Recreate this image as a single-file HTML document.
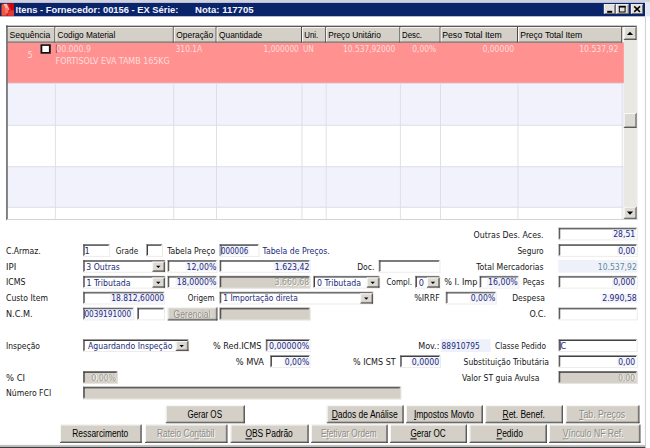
<!DOCTYPE html>
<html lang="pt-BR">
<head>
<meta charset="utf-8">
<title>Itens - Fornecedor: 00156 - EX Série: Nota: 117705</title>
<style>
html,body{margin:0;padding:0;background:#fff;width:650px;height:448px;overflow:hidden}
svg{display:block;font-family:"DejaVu Sans Condensed","DejaVu Sans","Liberation Sans",sans-serif}
.h{font-family:"Liberation Sans",sans-serif}
text{white-space:pre}
</style>
</head>
<body>
<svg width="650" height="448" viewBox="0 0 650 448">
<rect x="0.00" y="0.00" width="650.00" height="448.00" fill="#ffffff" />
<rect x="0.00" y="0.00" width="650.00" height="2.50" fill="#cfd2de" />
<rect x="0.00" y="2.80" width="645.00" height="13.50" fill="#0a246a" />
<rect x="645.20" y="2.40" width="4.80" height="14.10" fill="#e4e8f0" />
<rect x="644.90" y="16.60" width="1.00" height="429.40" fill="#cfcfd2" />
<rect x="0.00" y="444.90" width="646.00" height="1.40" fill="#c0c0c0" />
<rect x="0.00" y="446.70" width="645.40" height="1.30" fill="#404040" />
<g>
<rect x="1.60" y="3.60" width="12.40" height="12.20" fill="#dc2020" />
<path d="M1.6 5 L4.6 3.8 L8.6 9 L6 15.6 L1.6 15.6 Z" fill="#f4583c"/>
<path d="M3.4 4 L6.8 3.8 L9.4 9.6 L7.2 11 Z" fill="#ffb4b0"/>
<path d="M4.8 8.5 L7.6 8 L8.4 13 L5.6 13.6 Z" fill="#f87878"/>
<path d="M8.8 3.6 L14 3.6 L14 10 L11 10 Z" fill="#cc0808"/>
<path d="M9 11 L14 10.4 L14 15.8 L8 15.8 Z" fill="#e43a30"/>
</g>
<text x="15.60" y="12.60" font-size="9.5" fill="#f4f4ff" textLength="162.8" lengthAdjust="spacingAndGlyphs" font-weight="bold" class="h" >Itens - Fornecedor: 00156 - EX Série:</text>
<text x="195.00" y="12.60" font-size="9.5" fill="#f4f4ff" textLength="58.6" lengthAdjust="spacingAndGlyphs" font-weight="bold" class="h" >Nota: 117705</text>
<rect x="603.90" y="4.20" width="11.30" height="9.70" fill="#e3e1dc" />
<rect x="603.90" y="4.20" width="11.30" height="0.70" fill="#ffffff" />
<rect x="603.90" y="4.20" width="0.70" height="9.70" fill="#ffffff" />
<rect x="604.60" y="13.00" width="10.60" height="0.90" fill="#6c6c6c" />
<rect x="614.30" y="4.90" width="0.90" height="9.00" fill="#6c6c6c" />
<rect x="607.20" y="10.80" width="5.00" height="2.00" fill="#000" />
<rect x="615.90" y="4.20" width="12.70" height="9.70" fill="#e3e1dc" />
<rect x="615.90" y="4.20" width="12.70" height="0.70" fill="#ffffff" />
<rect x="615.90" y="4.20" width="0.70" height="9.70" fill="#ffffff" />
<rect x="616.60" y="13.00" width="12.00" height="0.90" fill="#6c6c6c" />
<rect x="627.70" y="4.90" width="0.90" height="9.00" fill="#6c6c6c" />
<rect x="619.3" y="6.6" width="5.8" height="5.4" fill="none" stroke="#000" stroke-width="1"/>
<rect x="618.80" y="5.80" width="6.80" height="1.70" fill="#000" />
<rect x="630.90" y="4.20" width="12.00" height="9.70" fill="#e3e1dc" />
<rect x="630.90" y="4.20" width="12.00" height="0.70" fill="#ffffff" />
<rect x="630.90" y="4.20" width="0.70" height="9.70" fill="#ffffff" />
<rect x="631.60" y="13.00" width="11.30" height="0.90" fill="#6c6c6c" />
<rect x="642.00" y="4.90" width="0.90" height="9.00" fill="#6c6c6c" />
<path d="M634.2 6.4 L640.0 11.9 M640.0 6.4 L634.2 11.9" stroke="#000" stroke-width="1.5" fill="none"/>
<rect x="6.00" y="25.00" width="631.40" height="195.20" fill="#ffffff" />
<rect x="7.60" y="42.50" width="616.40" height="40.80" fill="#ff9290" />
<rect x="7.60" y="83.30" width="616.40" height="42.00" fill="#f1f2fc" />
<rect x="7.60" y="125.30" width="616.40" height="41.50" fill="#ffffff" />
<rect x="7.60" y="166.80" width="616.40" height="40.50" fill="#f1f2fc" />
<rect x="7.60" y="207.30" width="616.40" height="11.70" fill="#ffffff" />
<rect x="7.60" y="82.80" width="616.00" height="0.90" fill="#d9d9e4" />
<rect x="7.60" y="124.80" width="616.00" height="0.90" fill="#d9d9e4" />
<rect x="7.60" y="166.30" width="616.00" height="0.90" fill="#d9d9e4" />
<rect x="7.60" y="206.80" width="616.00" height="0.90" fill="#d9d9e4" />
<rect x="54.90" y="83.30" width="0.90" height="135.70" fill="#dcdce6" />
<rect x="173.30" y="83.30" width="0.90" height="135.70" fill="#dcdce6" />
<rect x="216.10" y="83.30" width="0.90" height="135.70" fill="#dcdce6" />
<rect x="301.50" y="83.30" width="0.90" height="135.70" fill="#dcdce6" />
<rect x="325.70" y="83.30" width="0.90" height="135.70" fill="#dcdce6" />
<rect x="399.90" y="83.30" width="0.90" height="135.70" fill="#dcdce6" />
<rect x="440.10" y="83.30" width="0.90" height="135.70" fill="#dcdce6" />
<rect x="517.50" y="83.30" width="0.90" height="135.70" fill="#dcdce6" />
<rect x="621.70" y="83.30" width="0.90" height="135.70" fill="#dcdce6" />
<rect x="7.60" y="26.80" width="614.60" height="15.60" fill="#d4d0c8" />
<rect x="7.60" y="27.00" width="614.60" height="0.80" fill="#ffffff" />
<rect x="7.60" y="41.60" width="614.60" height="1.00" fill="#555555" />
<rect x="54.40" y="26.80" width="1.00" height="15.70" fill="#4a4a4a" />
<rect x="55.40" y="27.60" width="0.90" height="14.00" fill="#ffffff" />
<rect x="172.80" y="26.80" width="1.00" height="15.70" fill="#4a4a4a" />
<rect x="173.80" y="27.60" width="0.90" height="14.00" fill="#ffffff" />
<rect x="215.60" y="26.80" width="1.00" height="15.70" fill="#4a4a4a" />
<rect x="216.60" y="27.60" width="0.90" height="14.00" fill="#ffffff" />
<rect x="301.00" y="26.80" width="1.00" height="15.70" fill="#4a4a4a" />
<rect x="302.00" y="27.60" width="0.90" height="14.00" fill="#ffffff" />
<rect x="325.20" y="26.80" width="1.00" height="15.70" fill="#4a4a4a" />
<rect x="326.20" y="27.60" width="0.90" height="14.00" fill="#ffffff" />
<rect x="399.40" y="26.80" width="1.00" height="15.70" fill="#4a4a4a" />
<rect x="400.40" y="27.60" width="0.90" height="14.00" fill="#ffffff" />
<rect x="439.60" y="26.80" width="1.00" height="15.70" fill="#4a4a4a" />
<rect x="440.60" y="27.60" width="0.90" height="14.00" fill="#ffffff" />
<rect x="517.00" y="26.80" width="1.00" height="15.70" fill="#4a4a4a" />
<rect x="518.00" y="27.60" width="0.90" height="14.00" fill="#ffffff" />
<rect x="621.20" y="26.80" width="1.00" height="15.70" fill="#4a4a4a" />
<text x="9.60" y="37.80" font-size="9.6" fill="#000" textLength="40.6" lengthAdjust="spacingAndGlyphs" class="h" >Sequência</text>
<text x="57.60" y="37.80" font-size="9.6" fill="#000" textLength="57.7" lengthAdjust="spacingAndGlyphs" class="h" >Codigo Material</text>
<text x="176.30" y="37.80" font-size="9.6" fill="#000" textLength="36.9" lengthAdjust="spacingAndGlyphs" class="h" >Operação</text>
<text x="219.00" y="37.80" font-size="9.6" fill="#000" textLength="43.2" lengthAdjust="spacingAndGlyphs" class="h" >Quantidade</text>
<text x="304.30" y="37.80" font-size="9.6" fill="#000" textLength="14.0" lengthAdjust="spacingAndGlyphs" class="h" >Uni.</text>
<text x="328.20" y="37.80" font-size="9.6" fill="#000" textLength="52.6" lengthAdjust="spacingAndGlyphs" class="h" >Preço Unitário</text>
<text x="402.00" y="37.80" font-size="9.6" fill="#000" textLength="20.0" lengthAdjust="spacingAndGlyphs" class="h" >Desc.</text>
<text x="442.20" y="37.80" font-size="9.6" fill="#000" textLength="59.6" lengthAdjust="spacingAndGlyphs" class="h" >Peso Total Item</text>
<text x="520.20" y="37.80" font-size="9.6" fill="#000" textLength="62.0" lengthAdjust="spacingAndGlyphs" class="h" >Preço Total Item</text>
<rect x="623.80" y="26.60" width="12.80" height="192.60" fill="#eae8e3" />
<rect x="623.80" y="26.80" width="13.00" height="13.20" fill="#dedbd4" />
<rect x="623.80" y="26.80" width="13.00" height="0.80" fill="#ffffff" />
<rect x="623.80" y="26.80" width="0.80" height="13.20" fill="#ffffff" />
<rect x="624.60" y="38.40" width="12.20" height="0.80" fill="#808080" />
<rect x="635.20" y="27.60" width="0.80" height="12.40" fill="#808080" />
<rect x="623.80" y="39.20" width="13.00" height="0.80" fill="#404040" />
<rect x="636.00" y="26.80" width="0.80" height="13.20" fill="#404040" />
<path d="M626.90 34.95 L633.10 34.95 L630.00 31.65 Z" fill="#000"/>
<rect x="623.80" y="113.00" width="13.00" height="15.00" fill="#dcdad4" />
<rect x="623.80" y="113.00" width="13.00" height="0.80" fill="#ffffff" />
<rect x="623.80" y="113.00" width="0.80" height="15.00" fill="#ffffff" />
<rect x="624.60" y="126.40" width="12.20" height="0.80" fill="#808080" />
<rect x="635.20" y="113.80" width="0.80" height="14.20" fill="#808080" />
<rect x="623.80" y="127.20" width="13.00" height="0.80" fill="#404040" />
<rect x="636.00" y="113.00" width="0.80" height="15.00" fill="#404040" />
<rect x="623.80" y="206.80" width="13.00" height="12.40" fill="#dedbd4" />
<rect x="623.80" y="206.80" width="13.00" height="0.80" fill="#ffffff" />
<rect x="623.80" y="206.80" width="0.80" height="12.40" fill="#ffffff" />
<rect x="624.60" y="217.60" width="12.20" height="0.80" fill="#808080" />
<rect x="635.20" y="207.60" width="0.80" height="11.60" fill="#808080" />
<rect x="623.80" y="218.40" width="13.00" height="0.80" fill="#404040" />
<rect x="636.00" y="206.80" width="0.80" height="12.40" fill="#404040" />
<path d="M626.90 211.55 L633.10 211.55 L630.00 214.85 Z" fill="#000"/>
<rect x="6.00" y="25.70" width="630.80" height="1.20" fill="#454545" />
<rect x="6.00" y="25.00" width="0.80" height="195.20" fill="#6e6e6e" />
<rect x="6.80" y="25.80" width="0.80" height="193.60" fill="#404040" />
<rect x="7.60" y="219.00" width="629.80" height="0.90" fill="#d0cec8" />
<rect x="636.60" y="26.60" width="0.80" height="193.60" fill="#e4e2dc" />
<text x="27.60" y="58.40" font-size="9.1" fill="#ffdcdc" >5</text>
<rect x="40.50" y="44.30" width="10.30" height="9.40" fill="#111" />
<rect x="42.30" y="45.90" width="6.60" height="6.10" fill="#ffffff" />
<rect x="55.90" y="44.60" width="0.70" height="8.40" fill="#803030" />
<text x="56.20" y="52.20" font-size="9.1" fill="#ffdcdc" textLength="34.8" lengthAdjust="spacingAndGlyphs" >00.000.9</text>
<text x="55.60" y="64.20" font-size="9.1" fill="#ffdcdc" textLength="114.0" lengthAdjust="spacingAndGlyphs" >FORTISOLV EVA TAMB 165KG</text>
<text x="175.60" y="52.20" font-size="9.1" fill="#ffdcdc" textLength="26.6" lengthAdjust="spacingAndGlyphs" >310.1A</text>
<text x="298.80" y="52.20" font-size="9.1" fill="#ffdcdc" text-anchor="end" textLength="35.2" lengthAdjust="spacingAndGlyphs" >1,000000</text>
<text x="303.00" y="52.20" font-size="9.1" fill="#ffdcdc" textLength="10.8" lengthAdjust="spacingAndGlyphs" >UN</text>
<text x="395.40" y="52.20" font-size="9.1" fill="#ffdcdc" text-anchor="end" textLength="52.4" lengthAdjust="spacingAndGlyphs" >10.537,92000</text>
<text x="436.20" y="52.20" font-size="9.1" fill="#ffdcdc" text-anchor="end" textLength="24.0" lengthAdjust="spacingAndGlyphs" >0,00%</text>
<text x="514.20" y="52.20" font-size="9.1" fill="#ffdcdc" text-anchor="end" textLength="31.8" lengthAdjust="spacingAndGlyphs" >0,00000</text>
<text x="618.40" y="52.20" font-size="9.1" fill="#ffdcdc" text-anchor="end" textLength="39.2" lengthAdjust="spacingAndGlyphs" >10.537,92</text>
<text x="6.00" y="253.60" font-size="9.1" fill="#151515" textLength="34.8" lengthAdjust="spacingAndGlyphs" >C.Armaz.</text>
<text x="6.00" y="269.50" font-size="9.1" fill="#151515" textLength="10.2" lengthAdjust="spacingAndGlyphs" >IPI</text>
<text x="6.00" y="285.40" font-size="9.1" fill="#151515" textLength="19.6" lengthAdjust="spacingAndGlyphs" >ICMS</text>
<text x="6.00" y="301.30" font-size="9.1" fill="#151515" textLength="42.0" lengthAdjust="spacingAndGlyphs" >Custo Item</text>
<text x="6.00" y="317.20" font-size="9.1" fill="#151515" textLength="26.6" lengthAdjust="spacingAndGlyphs" >N.C.M.</text>
<rect x="83.00" y="244.10" width="27.20" height="12.60" fill="#ffffff" />
<rect x="83.00" y="255.90" width="27.20" height="0.80" fill="#e9e7e2" />
<rect x="109.40" y="244.10" width="0.80" height="12.60" fill="#e9e7e2" />
<rect x="83.00" y="244.10" width="26.40" height="0.70" fill="#707070" />
<rect x="83.00" y="244.10" width="0.70" height="11.80" fill="#707070" />
<rect x="83.70" y="244.80" width="25.00" height="0.90" fill="#2c2c30" />
<rect x="83.70" y="244.80" width="0.90" height="10.40" fill="#2c2c30" />
<text x="84.60" y="253.60" font-size="9.1" fill="#1a2a7a" >1</text>
<text x="115.80" y="253.60" font-size="9.1" fill="#151515" textLength="22.4" lengthAdjust="spacingAndGlyphs" >Grade</text>
<rect x="146.40" y="244.10" width="16.40" height="12.60" fill="#ffffff" />
<rect x="146.40" y="255.90" width="16.40" height="0.80" fill="#e9e7e2" />
<rect x="162.00" y="244.10" width="0.80" height="12.60" fill="#e9e7e2" />
<rect x="146.40" y="244.10" width="15.60" height="0.70" fill="#707070" />
<rect x="146.40" y="244.10" width="0.70" height="11.80" fill="#707070" />
<rect x="147.10" y="244.80" width="14.20" height="0.90" fill="#2c2c30" />
<rect x="147.10" y="244.80" width="0.90" height="10.40" fill="#2c2c30" />
<text x="167.20" y="253.60" font-size="9.1" fill="#151515" textLength="48.0" lengthAdjust="spacingAndGlyphs" >Tabela Preço</text>
<rect x="219.60" y="244.10" width="39.80" height="12.60" fill="#ffffff" />
<rect x="219.60" y="255.90" width="39.80" height="0.80" fill="#e9e7e2" />
<rect x="258.60" y="244.10" width="0.80" height="12.60" fill="#e9e7e2" />
<rect x="219.60" y="244.10" width="39.00" height="0.70" fill="#707070" />
<rect x="219.60" y="244.10" width="0.70" height="11.80" fill="#707070" />
<rect x="220.30" y="244.80" width="37.60" height="0.90" fill="#2c2c30" />
<rect x="220.30" y="244.80" width="0.90" height="10.40" fill="#2c2c30" />
<rect x="220.40" y="246.00" width="29.00" height="9.00" fill="#f3f3fc" />
<text x="221.00" y="253.60" font-size="9.1" fill="#1a2a7a" textLength="27.2" lengthAdjust="spacingAndGlyphs" >000006</text>
<rect x="220.90" y="246.20" width="0.70" height="8.40" fill="#202060" />
<text x="262.60" y="253.60" font-size="9.1" fill="#1a2a7a" textLength="67.2" lengthAdjust="spacingAndGlyphs" >Tabela de Preços.</text>
<rect x="83.00" y="260.00" width="82.80" height="12.60" fill="#ffffff" />
<rect x="83.00" y="271.80" width="82.80" height="0.80" fill="#e9e7e2" />
<rect x="165.00" y="260.00" width="0.80" height="12.60" fill="#e9e7e2" />
<rect x="83.00" y="260.00" width="82.00" height="0.70" fill="#707070" />
<rect x="83.00" y="260.00" width="0.70" height="11.80" fill="#707070" />
<rect x="83.70" y="260.70" width="80.60" height="0.90" fill="#2c2c30" />
<rect x="83.70" y="260.70" width="0.90" height="10.40" fill="#2c2c30" />
<rect x="152.40" y="261.70" width="12.60" height="10.00" fill="#dcd9d2" />
<rect x="152.40" y="261.70" width="12.60" height="0.80" fill="#ffffff" />
<rect x="152.40" y="261.70" width="0.80" height="10.00" fill="#ffffff" />
<rect x="153.20" y="270.10" width="11.80" height="0.80" fill="#808080" />
<rect x="163.40" y="262.50" width="0.80" height="9.20" fill="#808080" />
<rect x="152.40" y="270.90" width="12.60" height="0.80" fill="#404040" />
<rect x="164.20" y="261.70" width="0.80" height="10.00" fill="#404040" />
<path d="M156.10 265.75 L160.50 265.75 L158.30 268.05 Z" fill="#000"/>
<text x="86.30" y="269.60" font-size="9.1" fill="#1a2a7a" textLength="33.4" lengthAdjust="spacingAndGlyphs" >3 Outras</text>
<rect x="167.60" y="260.00" width="49.80" height="12.60" fill="#ffffff" />
<rect x="167.60" y="271.80" width="49.80" height="0.80" fill="#e9e7e2" />
<rect x="216.60" y="260.00" width="0.80" height="12.60" fill="#e9e7e2" />
<rect x="167.60" y="260.00" width="49.00" height="0.70" fill="#707070" />
<rect x="167.60" y="260.00" width="0.70" height="11.80" fill="#707070" />
<rect x="168.30" y="260.70" width="47.60" height="0.90" fill="#2c2c30" />
<rect x="168.30" y="260.70" width="0.90" height="10.40" fill="#2c2c30" />
<rect x="185.40" y="261.90" width="31.60" height="9.00" fill="#f3f3fc" />
<text x="216.40" y="269.50" font-size="9.1" fill="#1a2a7a" text-anchor="end" textLength="29.8" lengthAdjust="spacingAndGlyphs" >12,00%</text>
<rect x="219.60" y="260.00" width="90.80" height="12.60" fill="#ffffff" />
<rect x="219.60" y="271.80" width="90.80" height="0.80" fill="#e9e7e2" />
<rect x="309.60" y="260.00" width="0.80" height="12.60" fill="#e9e7e2" />
<rect x="219.60" y="260.00" width="90.00" height="0.70" fill="#707070" />
<rect x="219.60" y="260.00" width="0.70" height="11.80" fill="#707070" />
<rect x="220.30" y="260.70" width="88.60" height="0.90" fill="#2c2c30" />
<rect x="220.30" y="260.70" width="0.90" height="10.40" fill="#2c2c30" />
<rect x="273.60" y="261.90" width="36.40" height="9.00" fill="#f3f3fc" />
<text x="309.40" y="269.50" font-size="9.1" fill="#1a2a7a" text-anchor="end" textLength="34.6" lengthAdjust="spacingAndGlyphs" >1.623,42</text>
<text x="357.20" y="269.50" font-size="9.1" fill="#151515" textLength="17.2" lengthAdjust="spacingAndGlyphs" >Doc.</text>
<rect x="378.80" y="260.00" width="61.60" height="12.60" fill="#ffffff" />
<rect x="378.80" y="271.80" width="61.60" height="0.80" fill="#e9e7e2" />
<rect x="439.60" y="260.00" width="0.80" height="12.60" fill="#e9e7e2" />
<rect x="378.80" y="260.00" width="60.80" height="0.70" fill="#707070" />
<rect x="378.80" y="260.00" width="0.70" height="11.80" fill="#707070" />
<rect x="379.50" y="260.70" width="59.40" height="0.90" fill="#2c2c30" />
<rect x="379.50" y="260.70" width="0.90" height="10.40" fill="#2c2c30" />
<rect x="83.00" y="275.90" width="82.80" height="12.60" fill="#ffffff" />
<rect x="83.00" y="287.70" width="82.80" height="0.80" fill="#e9e7e2" />
<rect x="165.00" y="275.90" width="0.80" height="12.60" fill="#e9e7e2" />
<rect x="83.00" y="275.90" width="82.00" height="0.70" fill="#707070" />
<rect x="83.00" y="275.90" width="0.70" height="11.80" fill="#707070" />
<rect x="83.70" y="276.60" width="80.60" height="0.90" fill="#2c2c30" />
<rect x="83.70" y="276.60" width="0.90" height="10.40" fill="#2c2c30" />
<rect x="152.40" y="277.60" width="12.60" height="10.00" fill="#dcd9d2" />
<rect x="152.40" y="277.60" width="12.60" height="0.80" fill="#ffffff" />
<rect x="152.40" y="277.60" width="0.80" height="10.00" fill="#ffffff" />
<rect x="153.20" y="286.00" width="11.80" height="0.80" fill="#808080" />
<rect x="163.40" y="278.40" width="0.80" height="9.20" fill="#808080" />
<rect x="152.40" y="286.80" width="12.60" height="0.80" fill="#404040" />
<rect x="164.20" y="277.60" width="0.80" height="10.00" fill="#404040" />
<path d="M156.10 281.65 L160.50 281.65 L158.30 283.95 Z" fill="#000"/>
<text x="86.60" y="285.50" font-size="9.1" fill="#1a2a7a" textLength="44.0" lengthAdjust="spacingAndGlyphs" >1 Tributada</text>
<rect x="167.60" y="275.90" width="49.80" height="12.60" fill="#ffffff" />
<rect x="167.60" y="287.70" width="49.80" height="0.80" fill="#e9e7e2" />
<rect x="216.60" y="275.90" width="0.80" height="12.60" fill="#e9e7e2" />
<rect x="167.60" y="275.90" width="49.00" height="0.70" fill="#707070" />
<rect x="167.60" y="275.90" width="0.70" height="11.80" fill="#707070" />
<rect x="168.30" y="276.60" width="47.60" height="0.90" fill="#2c2c30" />
<rect x="168.30" y="276.60" width="0.90" height="10.40" fill="#2c2c30" />
<rect x="175.60" y="277.80" width="41.40" height="9.00" fill="#f3f3fc" />
<text x="216.40" y="285.40" font-size="9.1" fill="#1a2a7a" text-anchor="end" textLength="39.6" lengthAdjust="spacingAndGlyphs" >18,0000%</text>
<rect x="219.60" y="275.90" width="90.80" height="12.60" fill="#d4d0c8" />
<rect x="219.60" y="287.70" width="90.80" height="0.80" fill="#e9e7e2" />
<rect x="309.60" y="275.90" width="0.80" height="12.60" fill="#e9e7e2" />
<rect x="219.60" y="275.90" width="90.00" height="0.70" fill="#707070" />
<rect x="219.60" y="275.90" width="0.70" height="11.80" fill="#707070" />
<rect x="220.30" y="276.60" width="88.60" height="0.90" fill="#2c2c30" />
<rect x="220.30" y="276.60" width="0.90" height="10.40" fill="#2c2c30" />
<text x="310.00" y="286.20" font-size="9.1" fill="#ffffff" text-anchor="end" textLength="34.6" lengthAdjust="spacingAndGlyphs" >3.660,68</text>
<text x="309.20" y="285.40" font-size="9.1" fill="#9a9891" text-anchor="end" textLength="34.6" lengthAdjust="spacingAndGlyphs" >3.660,68</text>
<rect x="313.40" y="275.90" width="66.80" height="12.60" fill="#ffffff" />
<rect x="313.40" y="287.70" width="66.80" height="0.80" fill="#e9e7e2" />
<rect x="379.40" y="275.90" width="0.80" height="12.60" fill="#e9e7e2" />
<rect x="313.40" y="275.90" width="66.00" height="0.70" fill="#707070" />
<rect x="313.40" y="275.90" width="0.70" height="11.80" fill="#707070" />
<rect x="314.10" y="276.60" width="64.60" height="0.90" fill="#2c2c30" />
<rect x="314.10" y="276.60" width="0.90" height="10.40" fill="#2c2c30" />
<rect x="366.80" y="277.60" width="12.60" height="10.00" fill="#dcd9d2" />
<rect x="366.80" y="277.60" width="12.60" height="0.80" fill="#ffffff" />
<rect x="366.80" y="277.60" width="0.80" height="10.00" fill="#ffffff" />
<rect x="367.60" y="286.00" width="11.80" height="0.80" fill="#808080" />
<rect x="377.80" y="278.40" width="0.80" height="9.20" fill="#808080" />
<rect x="366.80" y="286.80" width="12.60" height="0.80" fill="#404040" />
<rect x="378.60" y="277.60" width="0.80" height="10.00" fill="#404040" />
<path d="M370.50 281.65 L374.90 281.65 L372.70 283.95 Z" fill="#000"/>
<text x="317.00" y="285.50" font-size="9.1" fill="#1a2a7a" textLength="44.0" lengthAdjust="spacingAndGlyphs" >0 Tributada</text>
<text x="386.40" y="285.40" font-size="9.1" fill="#151515" textLength="25.6" lengthAdjust="spacingAndGlyphs" >Compl.</text>
<rect x="415.20" y="275.90" width="25.20" height="12.60" fill="#ffffff" />
<rect x="415.20" y="287.70" width="25.20" height="0.80" fill="#e9e7e2" />
<rect x="439.60" y="275.90" width="0.80" height="12.60" fill="#e9e7e2" />
<rect x="415.20" y="275.90" width="24.40" height="0.70" fill="#707070" />
<rect x="415.20" y="275.90" width="0.70" height="11.80" fill="#707070" />
<rect x="415.90" y="276.60" width="23.00" height="0.90" fill="#2c2c30" />
<rect x="415.90" y="276.60" width="0.90" height="10.40" fill="#2c2c30" />
<rect x="427.00" y="277.60" width="12.60" height="10.00" fill="#dcd9d2" />
<rect x="427.00" y="277.60" width="12.60" height="0.80" fill="#ffffff" />
<rect x="427.00" y="277.60" width="0.80" height="10.00" fill="#ffffff" />
<rect x="427.80" y="286.00" width="11.80" height="0.80" fill="#808080" />
<rect x="438.00" y="278.40" width="0.80" height="9.20" fill="#808080" />
<rect x="427.00" y="286.80" width="12.60" height="0.80" fill="#404040" />
<rect x="438.80" y="277.60" width="0.80" height="10.00" fill="#404040" />
<path d="M430.70 281.65 L435.10 281.65 L432.90 283.95 Z" fill="#000"/>
<text x="418.80" y="285.50" font-size="9.1" fill="#1a2a7a" >0</text>
<text x="444.20" y="285.40" font-size="9.1" fill="#151515" textLength="33.2" lengthAdjust="spacingAndGlyphs" >% I. Imp</text>
<rect x="479.60" y="275.90" width="39.60" height="12.60" fill="#ffffff" />
<rect x="479.60" y="287.70" width="39.60" height="0.80" fill="#e9e7e2" />
<rect x="518.40" y="275.90" width="0.80" height="12.60" fill="#e9e7e2" />
<rect x="479.60" y="275.90" width="38.80" height="0.70" fill="#707070" />
<rect x="479.60" y="275.90" width="0.70" height="11.80" fill="#707070" />
<rect x="480.30" y="276.60" width="37.40" height="0.90" fill="#2c2c30" />
<rect x="480.30" y="276.60" width="0.90" height="10.40" fill="#2c2c30" />
<rect x="486.80" y="277.80" width="31.60" height="9.00" fill="#f3f3fc" />
<text x="517.80" y="285.40" font-size="9.1" fill="#1a2a7a" text-anchor="end" textLength="29.8" lengthAdjust="spacingAndGlyphs" >16,00%</text>
<rect x="83.00" y="291.80" width="81.80" height="12.60" fill="#ffffff" />
<rect x="83.00" y="303.60" width="81.80" height="0.80" fill="#e9e7e2" />
<rect x="164.00" y="291.80" width="0.80" height="12.60" fill="#e9e7e2" />
<rect x="83.00" y="291.80" width="81.00" height="0.70" fill="#707070" />
<rect x="83.00" y="291.80" width="0.70" height="11.80" fill="#707070" />
<rect x="83.70" y="292.50" width="79.60" height="0.90" fill="#2c2c30" />
<rect x="83.70" y="292.50" width="0.90" height="10.40" fill="#2c2c30" />
<rect x="110.00" y="293.70" width="54.80" height="9.00" fill="#f3f3fc" />
<text x="164.20" y="301.30" font-size="9.1" fill="#1a2a7a" text-anchor="end" textLength="53.0" lengthAdjust="spacingAndGlyphs" >18.812,60000</text>
<text x="187.80" y="301.30" font-size="9.1" fill="#151515" textLength="26.8" lengthAdjust="spacingAndGlyphs" >Origem</text>
<rect x="219.60" y="291.80" width="154.20" height="12.60" fill="#ffffff" />
<rect x="219.60" y="303.60" width="154.20" height="0.80" fill="#e9e7e2" />
<rect x="373.00" y="291.80" width="0.80" height="12.60" fill="#e9e7e2" />
<rect x="219.60" y="291.80" width="153.40" height="0.70" fill="#707070" />
<rect x="219.60" y="291.80" width="0.70" height="11.80" fill="#707070" />
<rect x="220.30" y="292.50" width="152.00" height="0.90" fill="#2c2c30" />
<rect x="220.30" y="292.50" width="0.90" height="10.40" fill="#2c2c30" />
<rect x="360.40" y="293.50" width="12.60" height="10.00" fill="#dcd9d2" />
<rect x="360.40" y="293.50" width="12.60" height="0.80" fill="#ffffff" />
<rect x="360.40" y="293.50" width="0.80" height="10.00" fill="#ffffff" />
<rect x="361.20" y="301.90" width="11.80" height="0.80" fill="#808080" />
<rect x="371.40" y="294.30" width="0.80" height="9.20" fill="#808080" />
<rect x="360.40" y="302.70" width="12.60" height="0.80" fill="#404040" />
<rect x="372.20" y="293.50" width="0.80" height="10.00" fill="#404040" />
<path d="M364.10 297.55 L368.50 297.55 L366.30 299.85 Z" fill="#000"/>
<text x="223.20" y="301.40" font-size="9.1" fill="#1a2a7a" textLength="74.6" lengthAdjust="spacingAndGlyphs" >1 Importação direta</text>
<text x="414.20" y="301.30" font-size="9.1" fill="#151515" textLength="25.6" lengthAdjust="spacingAndGlyphs" >%IRRF</text>
<rect x="445.80" y="291.80" width="50.80" height="12.60" fill="#ffffff" />
<rect x="445.80" y="303.60" width="50.80" height="0.80" fill="#e9e7e2" />
<rect x="495.80" y="291.80" width="0.80" height="12.60" fill="#e9e7e2" />
<rect x="445.80" y="291.80" width="50.00" height="0.70" fill="#707070" />
<rect x="445.80" y="291.80" width="0.70" height="11.80" fill="#707070" />
<rect x="446.50" y="292.50" width="48.60" height="0.90" fill="#2c2c30" />
<rect x="446.50" y="292.50" width="0.90" height="10.40" fill="#2c2c30" />
<rect x="469.60" y="293.70" width="26.20" height="9.00" fill="#f3f3fc" />
<text x="495.20" y="301.30" font-size="9.1" fill="#1a2a7a" text-anchor="end" textLength="24.4" lengthAdjust="spacingAndGlyphs" >0,00%</text>
<rect x="83.00" y="307.70" width="51.20" height="12.60" fill="#ffffff" />
<rect x="83.00" y="319.50" width="51.20" height="0.80" fill="#e9e7e2" />
<rect x="133.40" y="307.70" width="0.80" height="12.60" fill="#e9e7e2" />
<rect x="83.00" y="307.70" width="50.40" height="0.70" fill="#707070" />
<rect x="83.00" y="307.70" width="0.70" height="11.80" fill="#707070" />
<rect x="83.70" y="308.40" width="49.00" height="0.90" fill="#2c2c30" />
<rect x="83.70" y="308.40" width="0.90" height="10.40" fill="#2c2c30" />
<rect x="83.80" y="309.60" width="48.60" height="9.00" fill="#f3f3fc" />
<text x="84.40" y="317.20" font-size="9.1" fill="#1a2a7a" textLength="46.8" lengthAdjust="spacingAndGlyphs" >0039191000</text>
<rect x="84.30" y="309.80" width="0.70" height="8.40" fill="#202060" />
<rect x="137.20" y="307.70" width="27.60" height="12.60" fill="#ffffff" />
<rect x="137.20" y="319.50" width="27.60" height="0.80" fill="#e9e7e2" />
<rect x="164.00" y="307.70" width="0.80" height="12.60" fill="#e9e7e2" />
<rect x="137.20" y="307.70" width="26.80" height="0.70" fill="#707070" />
<rect x="137.20" y="307.70" width="0.70" height="11.80" fill="#707070" />
<rect x="137.90" y="308.40" width="25.40" height="0.90" fill="#2c2c30" />
<rect x="137.90" y="308.40" width="0.90" height="10.40" fill="#2c2c30" />
<rect x="167.60" y="307.40" width="49.80" height="13.00" fill="#d4d0c8" />
<rect x="167.60" y="307.40" width="49.80" height="0.80" fill="#ffffff" />
<rect x="167.60" y="307.40" width="0.80" height="13.00" fill="#ffffff" />
<rect x="168.40" y="318.80" width="49.00" height="0.80" fill="#808080" />
<rect x="215.80" y="308.20" width="0.80" height="12.20" fill="#808080" />
<rect x="167.60" y="319.60" width="49.80" height="0.80" fill="#404040" />
<rect x="216.60" y="307.40" width="0.80" height="13.00" fill="#404040" />
<text x="192.80" y="318.30" font-size="10" fill="#ffffff" text-anchor="middle" textLength="37.2" lengthAdjust="spacingAndGlyphs" class="h">Gerencial</text>
<text x="192.00" y="317.50" font-size="10" fill="#8c8a84" text-anchor="middle" textLength="37.2" lengthAdjust="spacingAndGlyphs" class="h">Gerencial</text>
<rect x="219.60" y="307.70" width="90.80" height="12.60" fill="#d4d0c8" />
<rect x="219.60" y="319.50" width="90.80" height="0.80" fill="#e9e7e2" />
<rect x="309.60" y="307.70" width="0.80" height="12.60" fill="#e9e7e2" />
<rect x="219.60" y="307.70" width="90.00" height="0.70" fill="#707070" />
<rect x="219.60" y="307.70" width="0.70" height="11.80" fill="#707070" />
<rect x="220.30" y="308.40" width="88.60" height="0.90" fill="#2c2c30" />
<rect x="220.30" y="308.40" width="0.90" height="10.40" fill="#2c2c30" />
<text x="543.60" y="237.60" font-size="9.1" fill="#151515" text-anchor="end" textLength="70.0" lengthAdjust="spacingAndGlyphs" >Outras Des. Aces.</text>
<rect x="558.60" y="227.70" width="79.00" height="12.60" fill="#ffffff" />
<rect x="558.60" y="239.50" width="79.00" height="0.80" fill="#e9e7e2" />
<rect x="636.80" y="227.70" width="0.80" height="12.60" fill="#e9e7e2" />
<rect x="558.60" y="227.70" width="78.20" height="0.70" fill="#707070" />
<rect x="558.60" y="227.70" width="0.70" height="11.80" fill="#707070" />
<rect x="559.30" y="228.40" width="76.80" height="0.90" fill="#2c2c30" />
<rect x="559.30" y="228.40" width="0.90" height="10.40" fill="#2c2c30" />
<rect x="612.00" y="229.80" width="23.80" height="9.00" fill="#f3f3fc" />
<text x="635.20" y="237.40" font-size="9.1" fill="#1a2a7a" text-anchor="end" textLength="22.0" lengthAdjust="spacingAndGlyphs" >28,51</text>
<text x="543.60" y="253.60" font-size="9.1" fill="#151515" text-anchor="end" textLength="26.2" lengthAdjust="spacingAndGlyphs" >Seguro</text>
<rect x="558.60" y="244.10" width="79.00" height="12.60" fill="#ffffff" />
<rect x="558.60" y="255.90" width="79.00" height="0.80" fill="#e9e7e2" />
<rect x="636.80" y="244.10" width="0.80" height="12.60" fill="#e9e7e2" />
<rect x="558.60" y="244.10" width="78.20" height="0.70" fill="#707070" />
<rect x="558.60" y="244.10" width="0.70" height="11.80" fill="#707070" />
<rect x="559.30" y="244.80" width="76.80" height="0.90" fill="#2c2c30" />
<rect x="559.30" y="244.80" width="0.90" height="10.40" fill="#2c2c30" />
<rect x="617.00" y="246.00" width="18.80" height="9.00" fill="#f3f3fc" />
<text x="635.20" y="253.60" font-size="9.1" fill="#1a2a7a" text-anchor="end" textLength="17.0" lengthAdjust="spacingAndGlyphs" >0,00</text>
<text x="543.60" y="269.50" font-size="9.1" fill="#151515" text-anchor="end" textLength="67.4" lengthAdjust="spacingAndGlyphs" >Total Mercadorias</text>
<rect x="558.20" y="260.00" width="79.40" height="12.60" fill="#eef1f9" />
<text x="636.80" y="269.50" font-size="9.1" fill="#5f8c9c" text-anchor="end" textLength="39.0" lengthAdjust="spacingAndGlyphs" >10.537,92</text>
<text x="544.40" y="285.40" font-size="9.1" fill="#151515" text-anchor="end" textLength="21.6" lengthAdjust="spacingAndGlyphs" >Peças</text>
<rect x="558.60" y="275.90" width="79.00" height="12.60" fill="#ffffff" />
<rect x="558.60" y="287.70" width="79.00" height="0.80" fill="#e9e7e2" />
<rect x="636.80" y="275.90" width="0.80" height="12.60" fill="#e9e7e2" />
<rect x="558.60" y="275.90" width="78.20" height="0.70" fill="#707070" />
<rect x="558.60" y="275.90" width="0.70" height="11.80" fill="#707070" />
<rect x="559.30" y="276.60" width="76.80" height="0.90" fill="#2c2c30" />
<rect x="559.30" y="276.60" width="0.90" height="10.40" fill="#2c2c30" />
<rect x="612.00" y="277.80" width="23.80" height="9.00" fill="#f3f3fc" />
<text x="635.20" y="285.40" font-size="9.1" fill="#1a2a7a" text-anchor="end" textLength="22.0" lengthAdjust="spacingAndGlyphs" >0,000</text>
<text x="544.80" y="301.30" font-size="9.1" fill="#151515" text-anchor="end" textLength="32.6" lengthAdjust="spacingAndGlyphs" >Despesa</text>
<rect x="601.00" y="293.70" width="36.40" height="9.00" fill="#f3f3fc" />
<text x="636.80" y="301.30" font-size="9.1" fill="#1a2a7a" text-anchor="end" textLength="34.6" lengthAdjust="spacingAndGlyphs" >2.990,58</text>
<text x="546.00" y="317.20" font-size="9.1" fill="#151515" text-anchor="end" textLength="16.6" lengthAdjust="spacingAndGlyphs" >O.C.</text>
<rect x="558.60" y="307.70" width="79.00" height="12.60" fill="#ffffff" />
<rect x="558.60" y="319.50" width="79.00" height="0.80" fill="#e9e7e2" />
<rect x="636.80" y="307.70" width="0.80" height="12.60" fill="#e9e7e2" />
<rect x="558.60" y="307.70" width="78.20" height="0.70" fill="#707070" />
<rect x="558.60" y="307.70" width="0.70" height="11.80" fill="#707070" />
<rect x="559.30" y="308.40" width="76.80" height="0.90" fill="#2c2c30" />
<rect x="559.30" y="308.40" width="0.90" height="10.40" fill="#2c2c30" />
<text x="6.00" y="348.80" font-size="9.1" fill="#151515" textLength="34.0" lengthAdjust="spacingAndGlyphs" >Inspeção</text>
<rect x="83.00" y="339.30" width="106.20" height="12.60" fill="#ffffff" />
<rect x="83.00" y="351.10" width="106.20" height="0.80" fill="#e9e7e2" />
<rect x="188.40" y="339.30" width="0.80" height="12.60" fill="#e9e7e2" />
<rect x="83.00" y="339.30" width="105.40" height="0.70" fill="#707070" />
<rect x="83.00" y="339.30" width="0.70" height="11.80" fill="#707070" />
<rect x="83.70" y="340.00" width="104.00" height="0.90" fill="#2c2c30" />
<rect x="83.70" y="340.00" width="0.90" height="10.40" fill="#2c2c30" />
<rect x="175.80" y="341.00" width="12.60" height="10.00" fill="#dcd9d2" />
<rect x="175.80" y="341.00" width="12.60" height="0.80" fill="#ffffff" />
<rect x="175.80" y="341.00" width="0.80" height="10.00" fill="#ffffff" />
<rect x="176.60" y="349.40" width="11.80" height="0.80" fill="#808080" />
<rect x="186.80" y="341.80" width="0.80" height="9.20" fill="#808080" />
<rect x="175.80" y="350.20" width="12.60" height="0.80" fill="#404040" />
<rect x="187.60" y="341.00" width="0.80" height="10.00" fill="#404040" />
<path d="M179.50 345.05 L183.90 345.05 L181.70 347.35 Z" fill="#000"/>
<text x="88.00" y="348.90" font-size="9.1" fill="#1a2a7a" textLength="84.4" lengthAdjust="spacingAndGlyphs" >Aguardando Inspeção</text>
<text x="213.00" y="348.80" font-size="9.1" fill="#151515" textLength="48.4" lengthAdjust="spacingAndGlyphs" >% Red.ICMS</text>
<rect x="265.80" y="339.30" width="44.60" height="12.60" fill="#ffffff" />
<rect x="265.80" y="351.10" width="44.60" height="0.80" fill="#e9e7e2" />
<rect x="309.60" y="339.30" width="0.80" height="12.60" fill="#e9e7e2" />
<rect x="265.80" y="339.30" width="43.80" height="0.70" fill="#707070" />
<rect x="265.80" y="339.30" width="0.70" height="11.80" fill="#707070" />
<rect x="266.50" y="340.00" width="42.40" height="0.90" fill="#2c2c30" />
<rect x="266.50" y="340.00" width="0.90" height="10.40" fill="#2c2c30" />
<rect x="267.80" y="341.20" width="42.00" height="9.00" fill="#f3f3fc" />
<text x="309.20" y="348.80" font-size="9.1" fill="#1a2a7a" text-anchor="end" textLength="40.2" lengthAdjust="spacingAndGlyphs" >0,00000%</text>
<text x="418.20" y="348.80" font-size="9.1" fill="#151515" textLength="21.2" lengthAdjust="spacingAndGlyphs" >Mov.:</text>
<rect x="440.60" y="339.30" width="50.00" height="12.60" fill="#eef0fa" />
<text x="441.60" y="348.80" font-size="9.1" fill="#1a2a7a" textLength="38.2" lengthAdjust="spacingAndGlyphs" >88910795</text>
<text x="546.00" y="348.80" font-size="9.1" fill="#151515" text-anchor="end" textLength="51.0" lengthAdjust="spacingAndGlyphs" >Classe Pedido</text>
<rect x="558.60" y="339.30" width="79.00" height="12.60" fill="#ffffff" />
<rect x="558.60" y="351.10" width="79.00" height="0.80" fill="#e9e7e2" />
<rect x="636.80" y="339.30" width="0.80" height="12.60" fill="#e9e7e2" />
<rect x="558.60" y="339.30" width="78.20" height="0.70" fill="#707070" />
<rect x="558.60" y="339.30" width="0.70" height="11.80" fill="#707070" />
<rect x="559.30" y="340.00" width="76.80" height="0.90" fill="#2c2c30" />
<rect x="559.30" y="340.00" width="0.90" height="10.40" fill="#2c2c30" />
<text x="560.60" y="348.80" font-size="9.1" fill="#1a2a7a" >C</text>
<rect x="560.40" y="341.40" width="0.70" height="8.40" fill="#202060" />
<text x="235.80" y="364.80" font-size="9.1" fill="#151515" textLength="28.2" lengthAdjust="spacingAndGlyphs" >% MVA</text>
<rect x="270.20" y="355.30" width="40.20" height="12.60" fill="#ffffff" />
<rect x="270.20" y="367.10" width="40.20" height="0.80" fill="#e9e7e2" />
<rect x="309.60" y="355.30" width="0.80" height="12.60" fill="#e9e7e2" />
<rect x="270.20" y="355.30" width="39.40" height="0.70" fill="#707070" />
<rect x="270.20" y="355.30" width="0.70" height="11.80" fill="#707070" />
<rect x="270.90" y="356.00" width="38.00" height="0.90" fill="#2c2c30" />
<rect x="270.90" y="356.00" width="0.90" height="10.40" fill="#2c2c30" />
<rect x="283.60" y="357.20" width="26.20" height="9.00" fill="#f3f3fc" />
<text x="309.20" y="364.80" font-size="9.1" fill="#1a2a7a" text-anchor="end" textLength="24.4" lengthAdjust="spacingAndGlyphs" >0,00%</text>
<text x="353.00" y="364.80" font-size="9.1" fill="#151515" textLength="42.6" lengthAdjust="spacingAndGlyphs" >% ICMS ST</text>
<rect x="400.00" y="355.30" width="40.80" height="12.60" fill="#ffffff" />
<rect x="400.00" y="367.10" width="40.80" height="0.80" fill="#e9e7e2" />
<rect x="440.00" y="355.30" width="0.80" height="12.60" fill="#e9e7e2" />
<rect x="400.00" y="355.30" width="40.00" height="0.70" fill="#707070" />
<rect x="400.00" y="355.30" width="0.70" height="11.80" fill="#707070" />
<rect x="400.70" y="356.00" width="38.60" height="0.90" fill="#2c2c30" />
<rect x="400.70" y="356.00" width="0.90" height="10.40" fill="#2c2c30" />
<rect x="410.60" y="357.20" width="29.20" height="9.00" fill="#f3f3fc" />
<text x="439.20" y="364.80" font-size="9.1" fill="#1a2a7a" text-anchor="end" textLength="27.4" lengthAdjust="spacingAndGlyphs" >0,0000</text>
<text x="549.00" y="364.80" font-size="9.1" fill="#151515" text-anchor="end" textLength="85.4" lengthAdjust="spacingAndGlyphs" >Substituição Tributária</text>
<rect x="558.60" y="355.30" width="79.00" height="12.60" fill="#ffffff" />
<rect x="558.60" y="367.10" width="79.00" height="0.80" fill="#e9e7e2" />
<rect x="636.80" y="355.30" width="0.80" height="12.60" fill="#e9e7e2" />
<rect x="558.60" y="355.30" width="78.20" height="0.70" fill="#707070" />
<rect x="558.60" y="355.30" width="0.70" height="11.80" fill="#707070" />
<rect x="559.30" y="356.00" width="76.80" height="0.90" fill="#2c2c30" />
<rect x="559.30" y="356.00" width="0.90" height="10.40" fill="#2c2c30" />
<rect x="617.00" y="357.20" width="18.80" height="9.00" fill="#f3f3fc" />
<text x="635.20" y="364.80" font-size="9.1" fill="#1a2a7a" text-anchor="end" textLength="17.0" lengthAdjust="spacingAndGlyphs" >0,00</text>
<text x="6.00" y="380.60" font-size="9.1" fill="#151515" textLength="19.0" lengthAdjust="spacingAndGlyphs" >% CI</text>
<rect x="83.00" y="371.10" width="35.00" height="12.60" fill="#d4d0c8" />
<rect x="83.00" y="382.90" width="35.00" height="0.80" fill="#e9e7e2" />
<rect x="117.20" y="371.10" width="0.80" height="12.60" fill="#e9e7e2" />
<rect x="83.00" y="371.10" width="34.20" height="0.70" fill="#707070" />
<rect x="83.00" y="371.10" width="0.70" height="11.80" fill="#707070" />
<rect x="83.70" y="371.80" width="32.80" height="0.90" fill="#2c2c30" />
<rect x="83.70" y="371.80" width="0.90" height="10.40" fill="#2c2c30" />
<text x="116.80" y="381.40" font-size="9.1" fill="#ffffff" text-anchor="end" textLength="24.4" lengthAdjust="spacingAndGlyphs" >0,00%</text>
<text x="116.00" y="380.60" font-size="9.1" fill="#9a9891" text-anchor="end" textLength="24.4" lengthAdjust="spacingAndGlyphs" >0,00%</text>
<text x="539.40" y="380.60" font-size="9.1" fill="#151515" text-anchor="end" textLength="77.4" lengthAdjust="spacingAndGlyphs" >Valor ST guia Avulsa</text>
<rect x="558.60" y="371.10" width="79.00" height="12.60" fill="#d4d0c8" />
<rect x="558.60" y="382.90" width="79.00" height="0.80" fill="#e9e7e2" />
<rect x="636.80" y="371.10" width="0.80" height="12.60" fill="#e9e7e2" />
<rect x="558.60" y="371.10" width="78.20" height="0.70" fill="#707070" />
<rect x="558.60" y="371.10" width="0.70" height="11.80" fill="#707070" />
<rect x="559.30" y="371.80" width="76.80" height="0.90" fill="#2c2c30" />
<rect x="559.30" y="371.80" width="0.90" height="10.40" fill="#2c2c30" />
<text x="636.00" y="381.40" font-size="9.1" fill="#ffffff" text-anchor="end" textLength="17.0" lengthAdjust="spacingAndGlyphs" >0,00</text>
<text x="635.20" y="380.60" font-size="9.1" fill="#9a9891" text-anchor="end" textLength="17.0" lengthAdjust="spacingAndGlyphs" >0,00</text>
<text x="6.00" y="396.20" font-size="9.1" fill="#151515" textLength="45.2" lengthAdjust="spacingAndGlyphs" >Número FCI</text>
<rect x="83.00" y="386.70" width="318.20" height="12.60" fill="#d4d0c8" />
<rect x="83.00" y="398.50" width="318.20" height="0.80" fill="#e9e7e2" />
<rect x="400.40" y="386.70" width="0.80" height="12.60" fill="#e9e7e2" />
<rect x="83.00" y="386.70" width="317.40" height="0.70" fill="#707070" />
<rect x="83.00" y="386.70" width="0.70" height="11.80" fill="#707070" />
<rect x="83.70" y="387.40" width="316.00" height="0.90" fill="#2c2c30" />
<rect x="83.70" y="387.40" width="0.90" height="10.40" fill="#2c2c30" />
<rect x="165.80" y="405.40" width="79.00" height="17.80" fill="#d4d0c8" />
<rect x="165.80" y="405.40" width="79.00" height="0.80" fill="#ffffff" />
<rect x="165.80" y="405.40" width="0.80" height="17.80" fill="#ffffff" />
<rect x="166.60" y="421.60" width="78.20" height="0.80" fill="#808080" />
<rect x="243.20" y="406.20" width="0.80" height="17.00" fill="#808080" />
<rect x="165.80" y="422.40" width="79.00" height="0.80" fill="#404040" />
<rect x="244.00" y="405.40" width="0.80" height="17.80" fill="#404040" />
<text x="204.80" y="417.90" font-size="10" fill="#000" text-anchor="middle" textLength="34.4" lengthAdjust="spacingAndGlyphs" class="h">Gerar OS</text>
<rect x="326.80" y="405.40" width="76.80" height="17.80" fill="#d4d0c8" />
<rect x="326.80" y="405.40" width="76.80" height="0.80" fill="#ffffff" />
<rect x="326.80" y="405.40" width="0.80" height="17.80" fill="#ffffff" />
<rect x="327.60" y="421.60" width="76.00" height="0.80" fill="#808080" />
<rect x="402.00" y="406.20" width="0.80" height="17.00" fill="#808080" />
<rect x="326.80" y="422.40" width="76.80" height="0.80" fill="#404040" />
<rect x="402.80" y="405.40" width="0.80" height="17.80" fill="#404040" />
<text x="364.70" y="417.90" font-size="10" fill="#000" text-anchor="middle" textLength="66.0" lengthAdjust="spacingAndGlyphs" class="h"><tspan text-decoration="underline">D</tspan>ados de Análise</text>
<rect x="406.00" y="405.40" width="76.80" height="17.80" fill="#d4d0c8" />
<rect x="406.00" y="405.40" width="76.80" height="0.80" fill="#ffffff" />
<rect x="406.00" y="405.40" width="0.80" height="17.80" fill="#ffffff" />
<rect x="406.80" y="421.60" width="76.00" height="0.80" fill="#808080" />
<rect x="481.20" y="406.20" width="0.80" height="17.00" fill="#808080" />
<rect x="406.00" y="422.40" width="76.80" height="0.80" fill="#404040" />
<rect x="482.00" y="405.40" width="0.80" height="17.80" fill="#404040" />
<text x="443.90" y="417.90" font-size="10" fill="#000" text-anchor="middle" textLength="60.0" lengthAdjust="spacingAndGlyphs" class="h"><tspan text-decoration="underline">I</tspan>mpostos Movto</text>
<rect x="485.40" y="405.40" width="77.60" height="17.80" fill="#d4d0c8" />
<rect x="485.40" y="405.40" width="77.60" height="0.80" fill="#ffffff" />
<rect x="485.40" y="405.40" width="0.80" height="17.80" fill="#ffffff" />
<rect x="486.20" y="421.60" width="76.80" height="0.80" fill="#808080" />
<rect x="561.40" y="406.20" width="0.80" height="17.00" fill="#808080" />
<rect x="485.40" y="422.40" width="77.60" height="0.80" fill="#404040" />
<rect x="562.20" y="405.40" width="0.80" height="17.80" fill="#404040" />
<text x="523.70" y="417.90" font-size="10" fill="#000" text-anchor="middle" textLength="42.4" lengthAdjust="spacingAndGlyphs" class="h"><tspan text-decoration="underline">R</tspan>et. Benef.</text>
<rect x="565.80" y="405.40" width="73.60" height="17.80" fill="#d4d0c8" />
<rect x="565.80" y="405.40" width="73.60" height="0.80" fill="#ffffff" />
<rect x="565.80" y="405.40" width="0.80" height="17.80" fill="#ffffff" />
<rect x="566.60" y="421.60" width="72.80" height="0.80" fill="#808080" />
<rect x="637.80" y="406.20" width="0.80" height="17.00" fill="#808080" />
<rect x="565.80" y="422.40" width="73.60" height="0.80" fill="#404040" />
<rect x="638.60" y="405.40" width="0.80" height="17.80" fill="#404040" />
<text x="602.90" y="418.70" font-size="10" fill="#ffffff" text-anchor="middle" textLength="46.0" lengthAdjust="spacingAndGlyphs" class="h"><tspan text-decoration="underline">T</tspan>ab. Preços</text>
<text x="602.10" y="417.90" font-size="10" fill="#8c8a84" text-anchor="middle" textLength="46.0" lengthAdjust="spacingAndGlyphs" class="h"><tspan text-decoration="underline">T</tspan>ab. Preços</text>
<rect x="60.00" y="424.60" width="81.60" height="18.40" fill="#d4d0c8" />
<rect x="60.00" y="424.60" width="81.60" height="0.80" fill="#ffffff" />
<rect x="60.00" y="424.60" width="0.80" height="18.40" fill="#ffffff" />
<rect x="60.80" y="441.40" width="80.80" height="0.80" fill="#808080" />
<rect x="140.00" y="425.40" width="0.80" height="17.60" fill="#808080" />
<rect x="60.00" y="442.20" width="81.60" height="0.80" fill="#404040" />
<rect x="140.80" y="424.60" width="0.80" height="18.40" fill="#404040" />
<text x="100.30" y="437.40" font-size="10" fill="#000" text-anchor="middle" textLength="56.0" lengthAdjust="spacingAndGlyphs" class="h">Ressarcimento</text>
<rect x="145.00" y="424.60" width="82.40" height="18.40" fill="#d4d0c8" />
<rect x="145.00" y="424.60" width="82.40" height="0.80" fill="#ffffff" />
<rect x="145.00" y="424.60" width="0.80" height="18.40" fill="#ffffff" />
<rect x="145.80" y="441.40" width="81.60" height="0.80" fill="#808080" />
<rect x="225.80" y="425.40" width="0.80" height="17.60" fill="#808080" />
<rect x="145.00" y="442.20" width="82.40" height="0.80" fill="#404040" />
<rect x="226.60" y="424.60" width="0.80" height="18.40" fill="#404040" />
<text x="186.50" y="438.20" font-size="10" fill="#ffffff" text-anchor="middle" textLength="57.6" lengthAdjust="spacingAndGlyphs" class="h">Rateio Co<tspan text-decoration="underline">n</tspan>tábil</text>
<text x="185.70" y="437.40" font-size="10" fill="#8c8a84" text-anchor="middle" textLength="57.6" lengthAdjust="spacingAndGlyphs" class="h">Rateio Co<tspan text-decoration="underline">n</tspan>tábil</text>
<rect x="230.60" y="424.60" width="78.00" height="18.40" fill="#d4d0c8" />
<rect x="230.60" y="424.60" width="78.00" height="0.80" fill="#ffffff" />
<rect x="230.60" y="424.60" width="0.80" height="18.40" fill="#ffffff" />
<rect x="231.40" y="441.40" width="77.20" height="0.80" fill="#808080" />
<rect x="307.00" y="425.40" width="0.80" height="17.60" fill="#808080" />
<rect x="230.60" y="442.20" width="78.00" height="0.80" fill="#404040" />
<rect x="307.80" y="424.60" width="0.80" height="18.40" fill="#404040" />
<text x="269.10" y="437.40" font-size="10" fill="#000" text-anchor="middle" textLength="47.4" lengthAdjust="spacingAndGlyphs" class="h"><tspan text-decoration="underline">O</tspan>BS Padrão</text>
<rect x="311.00" y="424.60" width="76.60" height="18.40" fill="#d4d0c8" />
<rect x="311.00" y="424.60" width="76.60" height="0.80" fill="#ffffff" />
<rect x="311.00" y="424.60" width="0.80" height="18.40" fill="#ffffff" />
<rect x="311.80" y="441.40" width="75.80" height="0.80" fill="#808080" />
<rect x="386.00" y="425.40" width="0.80" height="17.60" fill="#808080" />
<rect x="311.00" y="442.20" width="76.60" height="0.80" fill="#404040" />
<rect x="386.80" y="424.60" width="0.80" height="18.40" fill="#404040" />
<text x="349.60" y="438.20" font-size="10" fill="#ffffff" text-anchor="middle" textLength="55.6" lengthAdjust="spacingAndGlyphs" class="h">E<tspan text-decoration="underline">f</tspan>etivar Ordem</text>
<text x="348.80" y="437.40" font-size="10" fill="#8c8a84" text-anchor="middle" textLength="55.6" lengthAdjust="spacingAndGlyphs" class="h">E<tspan text-decoration="underline">f</tspan>etivar Ordem</text>
<rect x="390.00" y="424.60" width="77.00" height="18.40" fill="#d4d0c8" />
<rect x="390.00" y="424.60" width="77.00" height="0.80" fill="#ffffff" />
<rect x="390.00" y="424.60" width="0.80" height="18.40" fill="#ffffff" />
<rect x="390.80" y="441.40" width="76.20" height="0.80" fill="#808080" />
<rect x="465.40" y="425.40" width="0.80" height="17.60" fill="#808080" />
<rect x="390.00" y="442.20" width="77.00" height="0.80" fill="#404040" />
<rect x="466.20" y="424.60" width="0.80" height="18.40" fill="#404040" />
<text x="428.00" y="437.40" font-size="10" fill="#000" text-anchor="middle" textLength="35.2" lengthAdjust="spacingAndGlyphs" class="h"><tspan text-decoration="underline">G</tspan>erar OC</text>
<rect x="469.60" y="424.60" width="77.20" height="18.40" fill="#d4d0c8" />
<rect x="469.60" y="424.60" width="77.20" height="0.80" fill="#ffffff" />
<rect x="469.60" y="424.60" width="0.80" height="18.40" fill="#ffffff" />
<rect x="470.40" y="441.40" width="76.40" height="0.80" fill="#808080" />
<rect x="545.20" y="425.40" width="0.80" height="17.60" fill="#808080" />
<rect x="469.60" y="442.20" width="77.20" height="0.80" fill="#404040" />
<rect x="546.00" y="424.60" width="0.80" height="18.40" fill="#404040" />
<text x="509.70" y="437.40" font-size="10" fill="#000" text-anchor="middle" textLength="26.4" lengthAdjust="spacingAndGlyphs" class="h"><tspan text-decoration="underline">P</tspan>edido</text>
<rect x="549.00" y="424.60" width="91.40" height="18.40" fill="#d4d0c8" />
<rect x="549.00" y="424.60" width="91.40" height="0.80" fill="#ffffff" />
<rect x="549.00" y="424.60" width="0.80" height="18.40" fill="#ffffff" />
<rect x="549.80" y="441.40" width="90.60" height="0.80" fill="#808080" />
<rect x="638.80" y="425.40" width="0.80" height="17.60" fill="#808080" />
<rect x="549.00" y="442.20" width="91.40" height="0.80" fill="#404040" />
<rect x="639.60" y="424.60" width="0.80" height="18.40" fill="#404040" />
<text x="594.00" y="438.20" font-size="10" fill="#ffffff" text-anchor="middle" textLength="60.8" lengthAdjust="spacingAndGlyphs" class="h"><tspan text-decoration="underline">V</tspan>ínculo NF Ref.</text>
<text x="593.20" y="437.40" font-size="10" fill="#8c8a84" text-anchor="middle" textLength="60.8" lengthAdjust="spacingAndGlyphs" class="h"><tspan text-decoration="underline">V</tspan>ínculo NF Ref.</text>
</svg>
</body>
</html>
